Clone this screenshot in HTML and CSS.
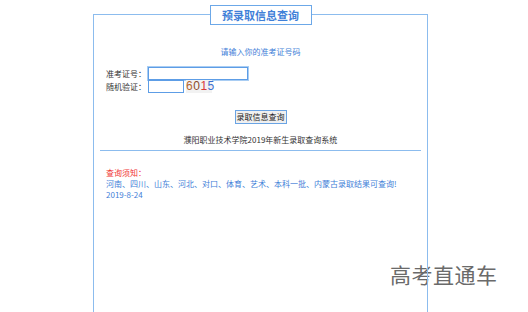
FILE: index.html
```html
<!DOCTYPE html>
<html lang="zh-CN">
<head>
  <meta charset="UTF-8" />
  <title>预录取信息查询</title>
  <link rel="stylesheet" href="styles.css">
</head>
<body>

  <!-- Query panel -->
  <div class="panel">
    <div class="panel-title">预录取信息查询</div>
    <div class="prompt">请输入你的准考证号码</div>

    <form class="query-form">
      <div class="form-row">
        <label for="examNo">准考证号：</label>
        <input id="examNo" class="input-long" type="text" />
      </div>
      <div class="form-row">
        <label for="code">随机验证：</label>
        <input id="code" class="input-short" type="text" />
        <span class="captcha"><b class="c1">6</b><b class="c2">0</b><b class="c3">1</b><b class="c4">5</b></span>
      </div>
      <div class="form-submit">
        <button type="button">录取信息查询</button>
      </div>
    </form>

    <div class="system-name">濮阳职业技术学院2019年新生录取查询系统</div>

    <div class="notice">
      <div class="notice-head">查询须知：</div>
      <div>河南、四川、山东、河北、对口、体育、艺术、本科一批、内蒙古录取结果可查询!</div>
      <div>2019-8-24</div>
    </div>
  </div>

  <div class="watermark">高考直通车</div>

</body>
</html>
```

FILE: styles.css
```css
/* Page */
body {
  margin: 0;
  font-family: "Noto Sans CJK SC", "Microsoft YaHei", sans-serif;
  font-size: 8px;
  color: #333;
  background: #fff;
}

/* Panel with title tab on its top border */
.panel {
  margin: 14px 0 0 93px;
  width: 333px;
  height: 298px;
  border: 1px solid #8cbcee;
  border-bottom: none;
}

.panel-title {
  width: 100px;
  height: 18px;
  margin: -10px auto 0;
  border: 1px solid #6ca8e8;
  background: #fff;
  color: #3f80d8;
  font-size: 11px;
  font-weight: bold;
  line-height: 18px;
  text-align: center;
}

.prompt {
  margin-top: 22px;
  line-height: 10px;
  text-align: center;
  color: #3f80d8;
}

/* Form */
.query-form {
  margin: 10px 0 0 12px;
}

.form-row {
  display: flex;
  align-items: center;
  gap: 2px;
  height: 13px;
}

.form-row label {
  width: 40px;
  line-height: 13px;
}

.form-row input {
  box-sizing: border-box;
  height: 13px;
  margin: 0;
  padding: 0 2px;
  border: 1px solid #5d9de6;
  font-size: 8px;
  outline: none;
}

.input-long {
  width: 100px;
  box-shadow: 0 0 0 1px #a9cdf3;
}

.input-short {
  width: 36px;
}

.captcha {
  width: 26px;
  height: 13px;
  background: #f2f2f2;
  font-family: "Liberation Sans", sans-serif;
  font-size: 12px;
  line-height: 13px;
  letter-spacing: 0.5px;
  text-align: center;
}

.captcha b { font-weight: normal; }
.captcha .c1 { color: #b5652e; }
.captcha .c2 { color: #8c4a2a; }
.captcha .c3 { color: #d8383a; }
.captcha .c4 { color: #3d6fd0; }

.form-submit {
  display: flex;
  justify-content: center;
  margin: 17px 0 0 -12px;
}

.form-submit button {
  height: 14px;
  width: 52px;
  padding: 0;
  border: 1px solid #6aa4e4;
  background: #f0f0f0;
  color: #222;
  font-family: inherit;
  font-size: 8px;
  line-height: 12px;
}

/* Footer texts */
.system-name {
  margin: 11px 6px 0;
  padding-bottom: 5px;
  border-bottom: 1px solid #8cbcee;
  line-height: 10px;
  text-align: center;
  color: #333;
}

.notice {
  margin: 16px 0 0 12px;
  line-height: 11px;
  color: #3f80d8;
}

.notice-head {
  color: #f03333;
}

.watermark {
  position: absolute;
  left: 390px;
  top: 259px;
  z-index: -1;
  color: #6a6a6a;
  font-size: 21px;
  letter-spacing: 0.5px;
}
```
